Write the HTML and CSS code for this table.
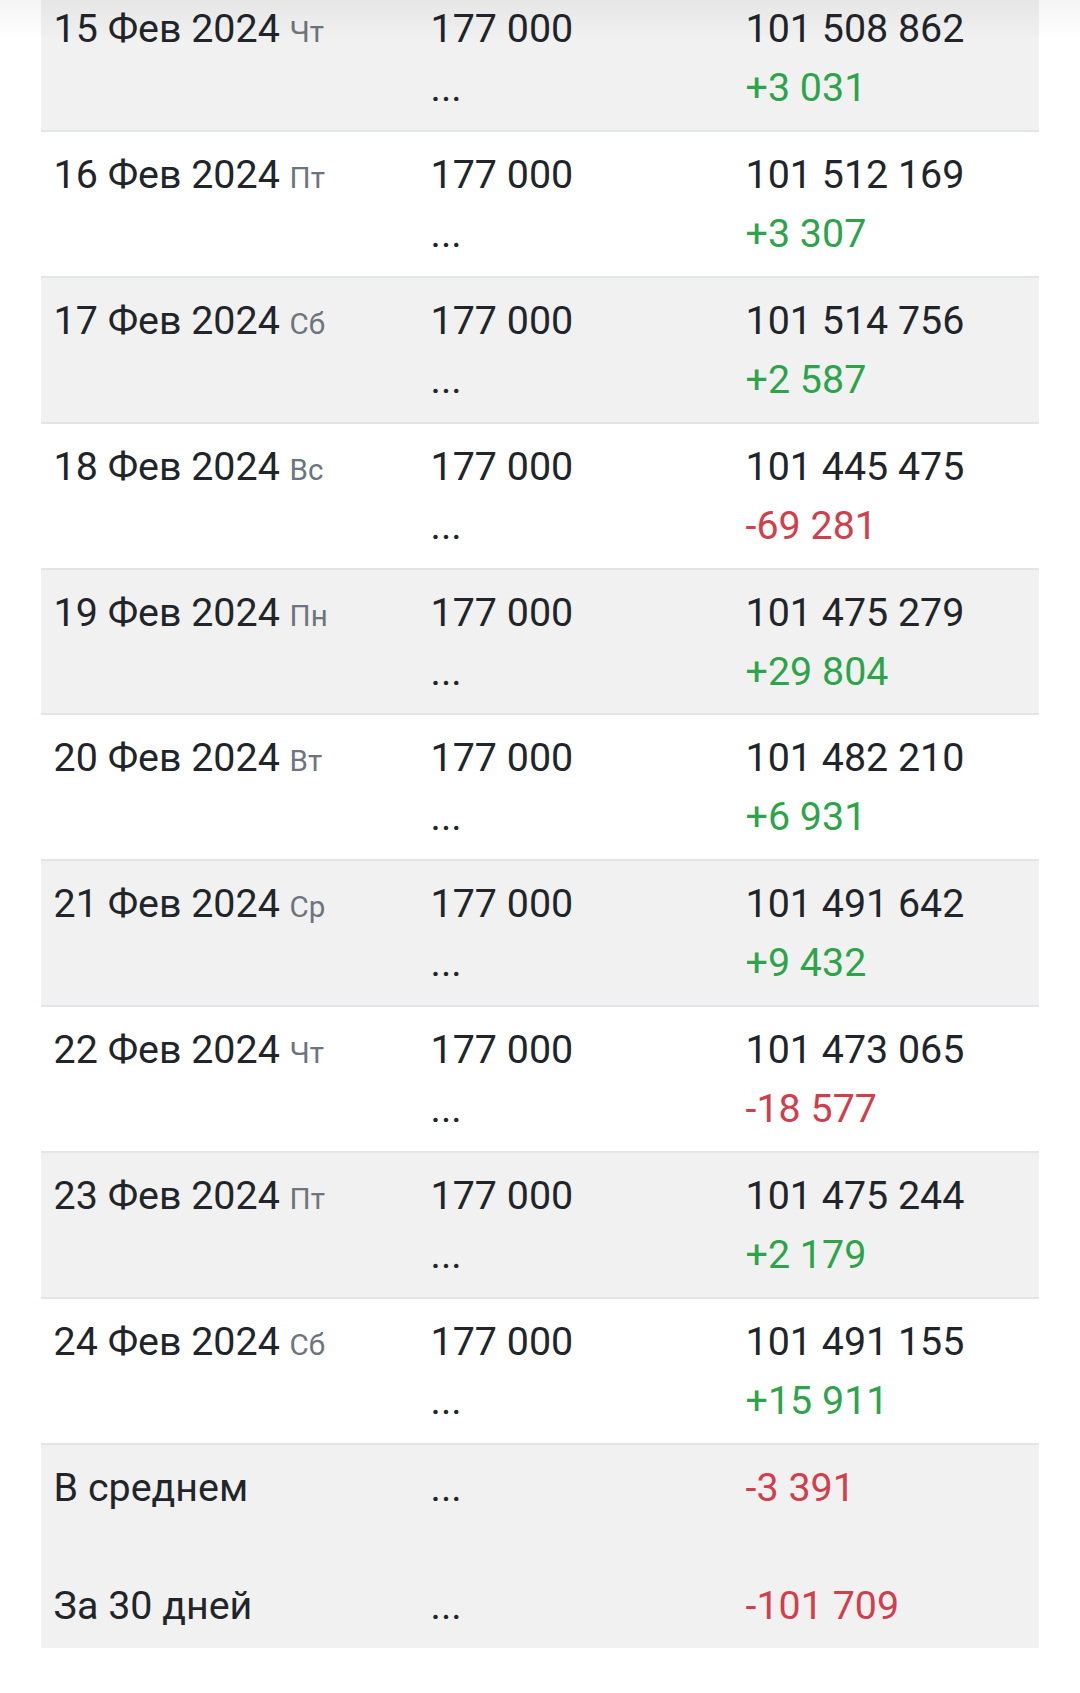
FILE: index.html
```html
<!DOCTYPE html>
<html lang="ru">
<head>
<meta charset="utf-8">
<title>Таблица</title>
<link rel="stylesheet" href="styles.css">
</head>
<body>
<div class="glow"></div>
<main class="container">
  <div class="table">
    <div class="row">
      <div class="cell">15 Фев 2024 <small class="muted">Чт</small></div>
      <div class="cell">177 000<br>...</div>
      <div class="cell">101 508 862<br><span class="up">+3 031</span></div>
    </div>
    <div class="row">
      <div class="cell">16 Фев 2024 <small class="muted">Пт</small></div>
      <div class="cell">177 000<br>...</div>
      <div class="cell">101 512 169<br><span class="up">+3 307</span></div>
    </div>
    <div class="row">
      <div class="cell">17 Фев 2024 <small class="muted">Сб</small></div>
      <div class="cell">177 000<br>...</div>
      <div class="cell">101 514 756<br><span class="up">+2 587</span></div>
    </div>
    <div class="row">
      <div class="cell">18 Фев 2024 <small class="muted">Вс</small></div>
      <div class="cell">177 000<br>...</div>
      <div class="cell">101 445 475<br><span class="down">-69 281</span></div>
    </div>
    <div class="row">
      <div class="cell">19 Фев 2024 <small class="muted">Пн</small></div>
      <div class="cell">177 000<br>...</div>
      <div class="cell">101 475 279<br><span class="up">+29 804</span></div>
    </div>
    <div class="row">
      <div class="cell">20 Фев 2024 <small class="muted">Вт</small></div>
      <div class="cell">177 000<br>...</div>
      <div class="cell">101 482 210<br><span class="up">+6 931</span></div>
    </div>
    <div class="row">
      <div class="cell">21 Фев 2024 <small class="muted">Ср</small></div>
      <div class="cell">177 000<br>...</div>
      <div class="cell">101 491 642<br><span class="up">+9 432</span></div>
    </div>
    <div class="row">
      <div class="cell">22 Фев 2024 <small class="muted">Чт</small></div>
      <div class="cell">177 000<br>...</div>
      <div class="cell">101 473 065<br><span class="down">-18 577</span></div>
    </div>
    <div class="row">
      <div class="cell">23 Фев 2024 <small class="muted">Пт</small></div>
      <div class="cell">177 000<br>...</div>
      <div class="cell">101 475 244<br><span class="up">+2 179</span></div>
    </div>
    <div class="row">
      <div class="cell">24 Фев 2024 <small class="muted">Сб</small></div>
      <div class="cell">177 000<br>...</div>
      <div class="cell">101 491 155<br><span class="up">+15 911</span></div>
    </div>
    <div class="row">
      <div class="cell">В среднем<br><br>За 30 дней</div>
      <div class="cell">...<br><br>...</div>
      <div class="cell"><span class="down">-3 391</span><br><br><span class="down">-101 709</span></div>
    </div>
  </div>
</main>
</body>
</html>
```
FILE: styles.css
```css
html, body {
  margin: 0;
  padding: 0;
  background: #ffffff;
}

body {
  font-family: Roboto, "Noto Sans", "Liberation Sans", sans-serif;
  font-size: 39.4px;
  line-height: 59px;
  color: #212529;
}

.glow {
  position: fixed;
  top: 0;
  left: 0;
  right: 0;
  height: 40px;
  background: linear-gradient(to bottom, rgba(0, 0, 0, 0.045), rgba(0, 0, 0, 0));
  pointer-events: none;
}

.container {
  padding: 0 41px;
}

.table {
  margin-top: -16px;
  display: flex;
  flex-direction: column;
}

.row {
  display: grid;
  grid-template-columns: 377px 315px 1fr;
  border-top: 2px solid #e3e5e8;
}

.row:nth-child(odd) {
  background: #f1f1f1;
}

.cell {
  padding: 13px 12.6px 12.9px;
  white-space: nowrap;
}

.muted {
  font-size: 75%;
  color: #6c757d;
}

.up {
  color: #2ea44a;
}

.down {
  color: #d13e4c;
}
```
